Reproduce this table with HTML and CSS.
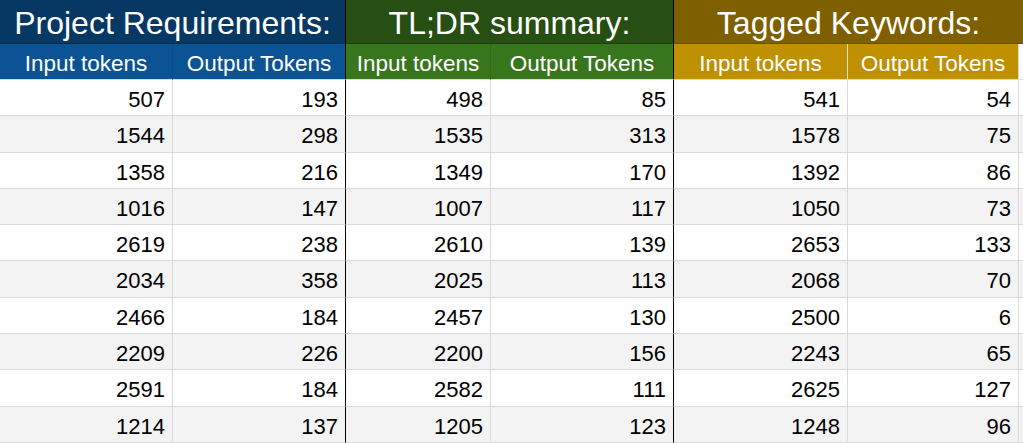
FILE: index.html
```html
<!DOCTYPE html>
<html lang="en">
<head>
<meta charset="utf-8">
<title>Token usage</title>
<link rel="stylesheet" href="styles.css">
</head>
<body>
<div class="sheet">
  <div class="title t-blue sep">Project Requirements:</div>
  <div class="title t-green sep">TL;DR summary:</div>
  <div class="title t-gold wide">Tagged Keywords:</div>

  <div class="sub s-blue">Input tokens</div>
  <div class="sub s-blue sep">Output Tokens</div>
  <div class="sub s-green">Input tokens</div>
  <div class="sub s-green sep">Output Tokens</div>
  <div class="sub s-gold">Input tokens</div>
  <div class="sub s-gold">Output Tokens</div>
  <div class="sub s-fill"></div>

  <div class="c">507</div><div class="c sep">193</div><div class="c">498</div><div class="c sep">85</div><div class="c">541</div><div class="c">54</div><div class="c f"></div>
  <div class="c g">1544</div><div class="c g sep">298</div><div class="c g">1535</div><div class="c g sep">313</div><div class="c g">1578</div><div class="c g">75</div><div class="c g f"></div>
  <div class="c">1358</div><div class="c sep">216</div><div class="c">1349</div><div class="c sep">170</div><div class="c">1392</div><div class="c">86</div><div class="c f"></div>
  <div class="c g">1016</div><div class="c g sep">147</div><div class="c g">1007</div><div class="c g sep">117</div><div class="c g">1050</div><div class="c g">73</div><div class="c g f"></div>
  <div class="c">2619</div><div class="c sep">238</div><div class="c">2610</div><div class="c sep">139</div><div class="c">2653</div><div class="c">133</div><div class="c f"></div>
  <div class="c g">2034</div><div class="c g sep">358</div><div class="c g">2025</div><div class="c g sep">113</div><div class="c g">2068</div><div class="c g">70</div><div class="c g f"></div>
  <div class="c">2466</div><div class="c sep">184</div><div class="c">2457</div><div class="c sep">130</div><div class="c">2500</div><div class="c">6</div><div class="c f"></div>
  <div class="c g">2209</div><div class="c g sep">226</div><div class="c g">2200</div><div class="c g sep">156</div><div class="c g">2243</div><div class="c g">65</div><div class="c g f"></div>
  <div class="c">2591</div><div class="c sep">184</div><div class="c">2582</div><div class="c sep">111</div><div class="c">2625</div><div class="c">127</div><div class="c f"></div>
  <div class="c g">1214</div><div class="c g sep">137</div><div class="c g">1205</div><div class="c g sep">123</div><div class="c g">1248</div><div class="c g">96</div><div class="c g f"></div>
</div>
</body>
</html>
```

FILE: styles.css
```css
html, body {
  margin: 0;
  padding: 0;
  background: #ffffff;
}

body {
  font-family: "Liberation Sans", Arial, sans-serif;
  overflow: hidden;
}

.sheet {
  display: grid;
  grid-template-columns: 173px 173px 145px 183px 174px 171px 1fr;
  grid-template-rows: 44px 36px repeat(10, 36.3px);
  width: 1023px;
}

.sheet > div {
  box-sizing: border-box;
  border-right: 1px solid #d9d9d9;
  overflow: hidden;
}

.title {
  grid-column: span 2;
  color: #ffffff;
  font-size: 32px;
  line-height: 46px;
  text-align: center;
  white-space: nowrap;
  border-bottom: 1px solid rgba(0, 0, 0, 0.18);
}

.title.wide {
  grid-column: span 3;
  border-right: none;
}

.t-blue { background: #073763; }
.t-green { background: #274e13; }
.t-gold { background: #7f6000; }

.sub {
  color: #ffffff;
  font-size: 22.5px;
  line-height: 22px;
  padding-top: 9px;
  text-align: center;
  white-space: nowrap;
  border-bottom: 1px solid #d9d9d9;
}

.sub.s-blue { background: #0b5394; border-right-color: #0a4a85; }
.sub.s-green { background: #38761d; border-right-color: #32691a; }
.sub.s-gold { background: #bf9000; border-right-color: #d9d9d9; }
.sub.s-fill { background: #ffffff; border-right: none; }

.c {
  font-size: 22px;
  line-height: 22px;
  text-align: right;
  color: #000000;
  padding: 9px 7px 0 0;
  background: #ffffff;
  border-bottom: 1px solid #d9d9d9;
}

.c.g { background: #f3f3f3; }
.c.f { border-right: none; padding: 0; }

.sheet > .sep {
  border-right: 1px solid #000000;
}
```
